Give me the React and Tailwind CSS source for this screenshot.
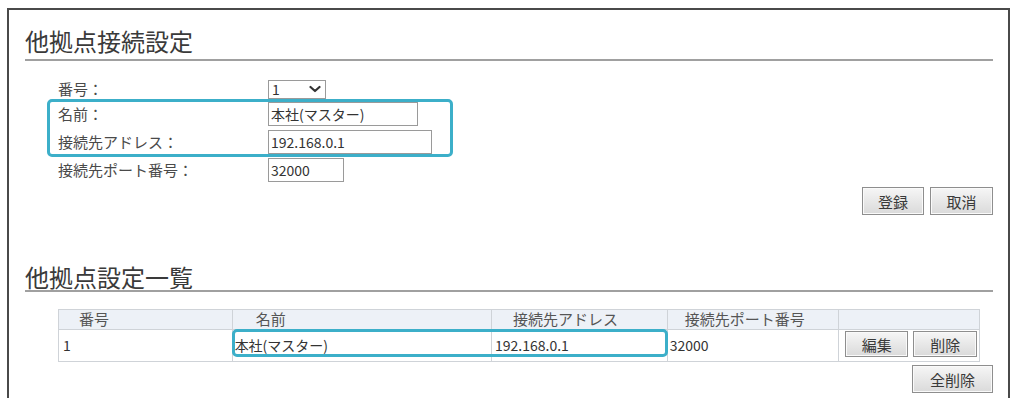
import React from 'react';

const font = { fontFamily: '"Noto Sans CJK JP", "Liberation Sans", sans-serif' };

function Btn({ children, className = '' }) {
    return (
        <button
            type="button"
            className={`flex items-center justify-center border border-[#8e8e8e] bg-gradient-to-b from-[#f6f6f6] to-[#dadada] text-[15px] leading-none text-[#3a3a3a] shadow-[inset_0_0_0_1px_#fafafa] ${className}`}
        >
            {children}
        </button>
    );
}

function Field({ label, children }) {
    return (
        <div className="flex h-[28px] items-center">
            <div className="w-[243px] pl-[33px] text-[15px] text-[#4a4a4a]">{label}</div>
            {children}
        </div>
    );
}

function TextBox({ value, width }) {
    return (
        <div className={`flex h-[24px] items-center border border-[#9a9a9a] bg-white px-[2px] text-[14px] text-[#333] ${width}`}>
            {value}
        </div>
    );
}

export default function App() {
    const cols = ['w-[174px]', 'w-[260px]', 'w-[176px]', 'w-[172px]', 'w-[140px]'];
    const heads = ['番号', '名前', '接続先アドレス', '接続先ポート番号', ''];
    const pads = ['pl-[20px]', 'pl-[23px]', 'pl-[21px]', 'pl-[17px]', ''];

    return (
        <div className="h-[398px] w-[1012px] overflow-hidden bg-white pl-[7px] pt-[8px]" style={font}>
            <div className="h-[400px] w-[1003px] border-l-2 border-r-2 border-t-2 border-[#4a4a4a] pl-[16px] pr-[15px]">
                {/* 他拠点接続設定 */}
                <div className="mt-[17px] border-b-2 border-[#a0a0a0] pb-[4px]">
                    <h1 className="h-[28px] text-[24px] leading-[28px] text-[#3a3a3a]">他拠点接続設定</h1>
                </div>

                <div className="mt-[17px]">
                    <div className="flex h-[22px] items-center">
                        <div className="w-[243px] pl-[33px] text-[15px] text-[#4a4a4a]">番号：</div>
                        <div className="flex h-[19px] w-[58px] items-center justify-between border border-[#9a9a9a] bg-white pl-[3px] pr-[4px] text-[14px] text-[#333]">
                            <span>1</span>
                            <svg width="12" height="8" viewBox="0 0 12 8" fill="none">
                                <path d="M1.5 2 L6 6 L10.5 2" stroke="#333" strokeWidth="2.2" strokeLinecap="round" strokeLinejoin="round" />
                            </svg>
                        </div>
                    </div>
                    <div className="relative">
                        <Field label="名前：">
                            <TextBox value="本社(マスター)" width="w-[150px]" />
                        </Field>
                        <Field label="接続先アドレス：">
                            <TextBox value="192.168.0.1" width="w-[164px]" />
                        </Field>
                        <div className="pointer-events-none absolute left-[22px] top-[-1px] h-[58px] w-[406px] rounded-[5px] border-[3px] border-[#3cafc9]" />
                    </div>
                    <Field label="接続先ポート番号：">
                        <TextBox value="32000" width="w-[76px]" />
                    </Field>
                </div>

                <div className="mt-[3px] flex justify-end gap-[6px]">
                    <Btn className="h-[28px] w-[62px]">登録</Btn>
                    <Btn className="h-[28px] w-[63px]">取消</Btn>
                </div>

                {/* 他拠点設定一覧 */}
                <div className="mt-[49px] border-b-2 border-[#a0a0a0]">
                    <h2 className="h-[26px] text-[24px] leading-[26px] text-[#3a3a3a]">他拠点設定一覧</h2>
                </div>

                <div className="relative ml-[33px] mt-[17px] w-[922px]">
                    <div className="flex h-[21px] border border-[#cfd3d8] bg-[#edf1f7]">
                        {heads.map((h, i) => (
                            <div key={i} className={`${cols[i]} ${pads[i]} flex items-center border-r border-[#cfd3d8] text-[15px] text-[#555] last:border-r-0`}>
                                {h}
                            </div>
                        ))}
                    </div>
                    <div className="flex h-[32px] border-b border-l border-r border-[#cfd3d8] text-[14px] text-[#333]">
                        <div className={`${cols[0]} flex items-center border-r border-[#cfd3d8] pl-[4px]`}>1</div>
                        <div className={`${cols[1]} flex items-center border-r border-[#cfd3d8] pl-[2px]`}>本社(マスター)</div>
                        <div className={`${cols[2]} flex items-center border-r border-[#cfd3d8] pl-[3px]`}>192.168.0.1</div>
                        <div className={`${cols[3]} flex items-center border-r border-[#cfd3d8] pl-[2px]`}>32000</div>
                        <div className={`${cols[4]} flex items-start gap-[5px] pl-[6px] pt-[1px]`}>
                            <Btn className="h-[26px] w-[63px]">編集</Btn>
                            <Btn className="h-[26px] w-[64px]">削除</Btn>
                        </div>
                    </div>
                    <div className="pointer-events-none absolute left-[174px] top-[20px] h-[28px] w-[436px] rounded-[5px] border-[3px] border-[#3cafc9]" />
                </div>

                <div className="mt-[3px] flex justify-end">
                    <Btn className="h-[28px] w-[81px]">全削除</Btn>
                </div>
            </div>
        </div>
    );
}
